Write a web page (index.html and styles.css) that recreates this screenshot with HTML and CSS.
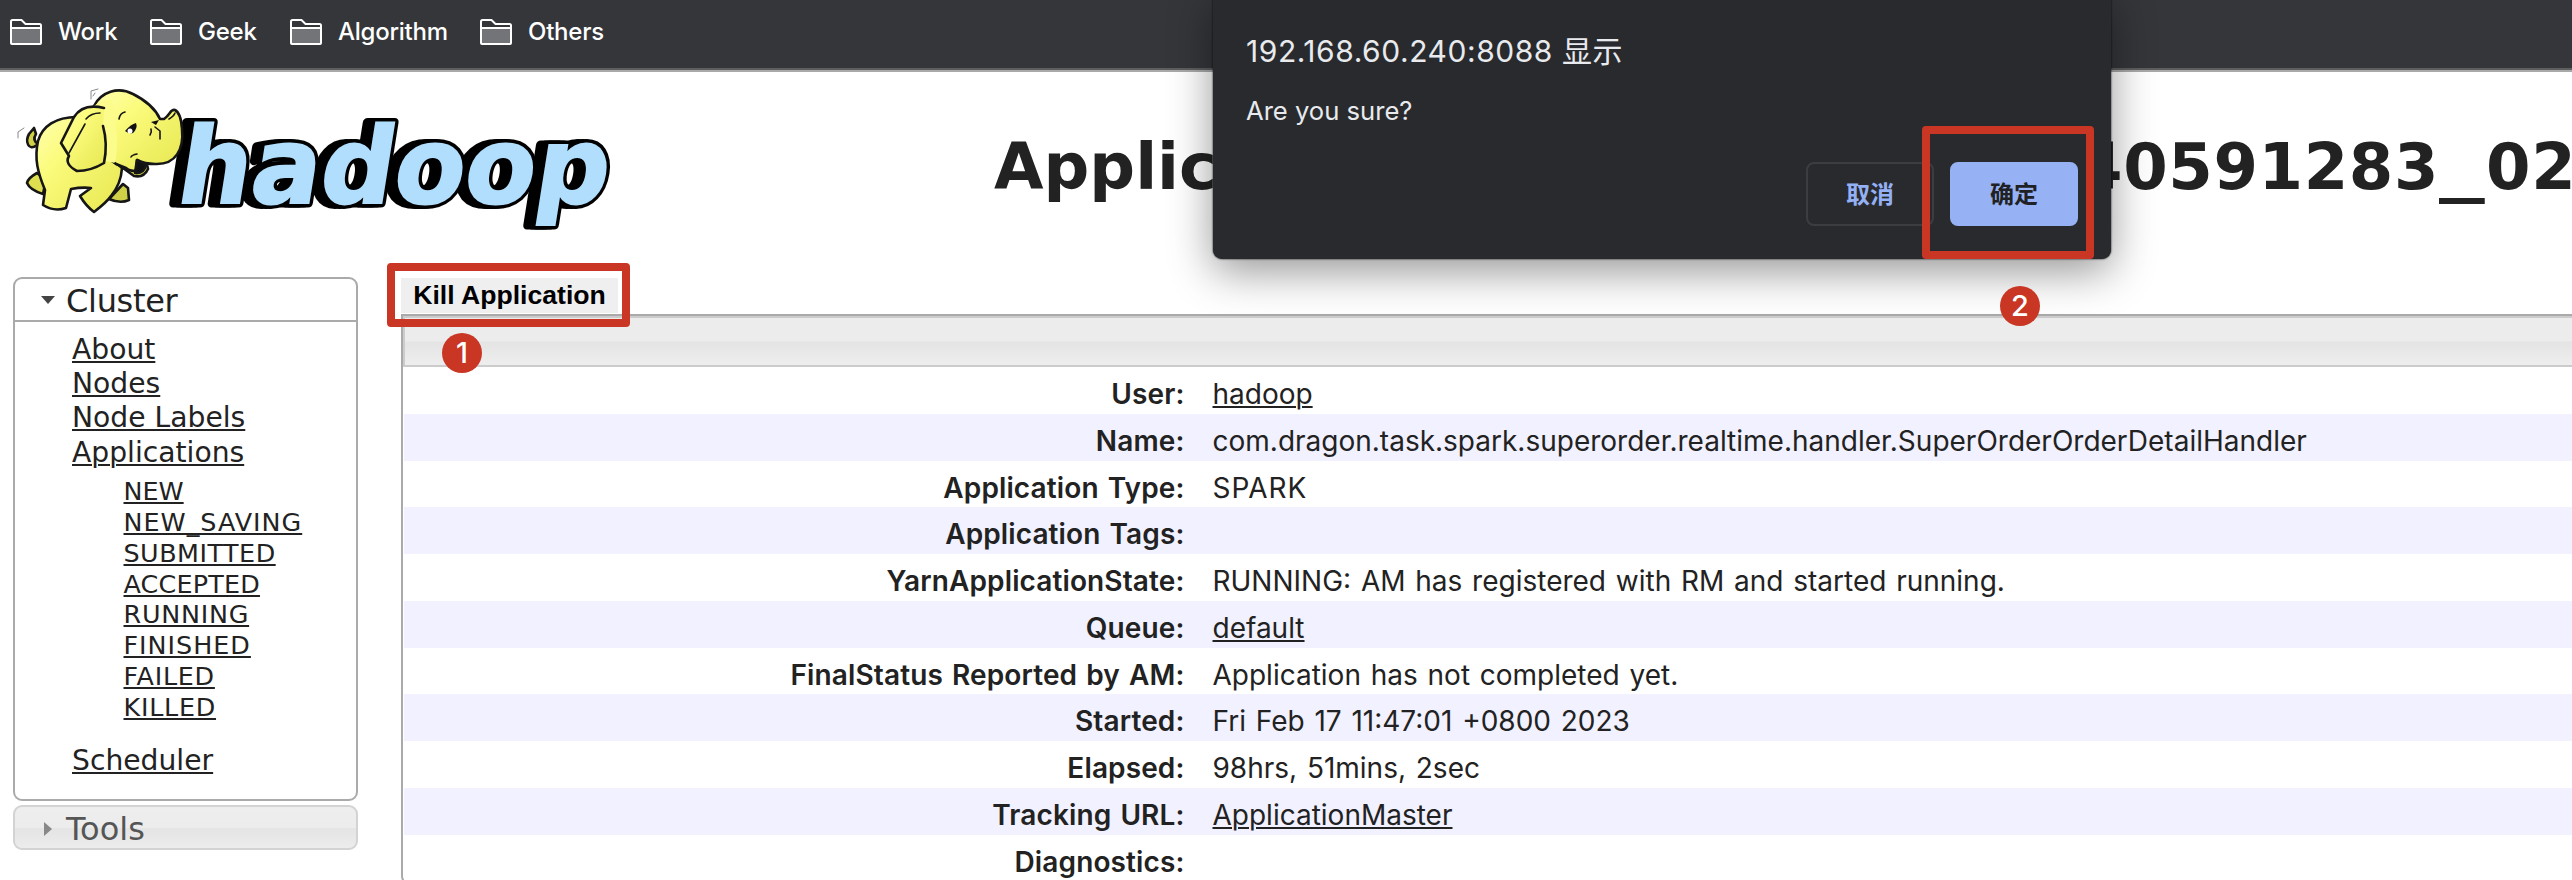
FILE: index.html
```
<!DOCTYPE html>
<html lang="zh-CN">
<head>
<meta charset="utf-8">
<title>Application</title>
<link rel="stylesheet" href="styles.css">
</head>
<body>
<svg class="defs" width="0" height="0" aria-hidden="true">
  <symbol id="folder" viewBox="0 0 32 26">
    <path d="M1 2.500q0-1.500 1.500-1.500h9l4 4h14q1.500 0 1.500 1.500V24q0 1-1 1H2q-1 0-1-1z" fill="#35363a" stroke="#fff" stroke-width="2"/>
    <path d="M2 10h28v14H2z" fill="#737477"/>
    <path d="M1 9h30" stroke="#fff" stroke-width="2"/>
  </symbol>
</svg>
<nav class="bookmarks">
  <a class="bookmark"><svg class="folder"><use href="#folder"/></svg><span class="w1">Work</span></a>
  <a class="bookmark"><svg class="folder"><use href="#folder"/></svg><span class="w2">Geek</span></a>
  <a class="bookmark"><svg class="folder"><use href="#folder"/></svg><span class="w3">Algorithm</span></a>
  <a class="bookmark"><svg class="folder"><use href="#folder"/></svg><span class="w4">Others</span></a>
</nav>
<header class="header">
  <svg class="logo" viewBox="0 80 640 150">
    <defs>
      <linearGradient id="skin" x1="0" y1="0" x2="1" y2="1">
        <stop offset="0" stop-color="#ffffb0"/><stop offset=".35" stop-color="#fbfb7c"/><stop offset="1" stop-color="#e6e650"/>
      </linearGradient>
    </defs>
    <g class="word" transform="translate(172 203) skewX(-9)">
      <text class="word-shadow" x="-7" y="0" textLength="431" lengthAdjust="spacingAndGlyphs">hadoop</text>
      <text class="word-shadow" x="-2" y="0" textLength="431" lengthAdjust="spacingAndGlyphs">hadoop</text>
      <text class="word-shadow" x="2" y="0" textLength="431" lengthAdjust="spacingAndGlyphs">hadoop</text>
      <text class="word-face" x="2" y="0" textLength="431" lengthAdjust="spacingAndGlyphs">hadoop</text>
    </g>
    <g stroke="#161616" stroke-width="2.600" stroke-linejoin="round" stroke-linecap="round" fill="url(#skin)">
      <path d="M37 145C28 152 25 141 29 134L34 128L36 134Q32 140 38 144z" fill="#cfcf48"/>
      <path d="M37 173Q28 178 27 183Q30 190 43 194L46 180z" fill="#dede50"/>
      <path d="M123 184L128 188L129 200Q120 204 109 199z" fill="#cfcf48"/>
      <path d="M80 117C55 116 42 127 38 141C34 159 38 173 45 190L43 205Q54 212 66 208L71 189Q82 187 91 188L80 196Q86 206 94 212Q107 202 111 196Q121 184 122 168z"/>
      <path d="M123 168L134 176Q144 178 148 169L146 160L132 158z" fill="#e8e858"/>
      <path d="M94 106C101 92 118 86 133 94C145 100 155 108 160 119L164 119C171 114 170 109 175 110Q181 113 182 129C184 149 176 165 155 164C146 164 141 162 137 160L136 171Q129 171 126 168L116 164C107 158 98 150 96 130z"/>
      <path d="M94 106Q80 120 84 140L100 160L115 163Q120 140 112 100Q104 98 94 106z" stroke="none" fill="#fcfc8c"/>
      <path d="M137 160L146 165Q144 174 135 173z" fill="#111"/>
      <path d="M104 108C88 104 79 109 74 117L61 143L69 156Q64 164 77 171Q91 171 104 163Q108 144 103 126"/>
      <path d="M69 153L85 124M86 119Q91 113 100 113M119 119Q120 113 125 112M131 157Q132 155 137 154M151 129Q152 132 150 135M155 127L160 131V139M169 119Q174 116 175 113M115 163L123 169" fill="none" stroke-width="1.600"/>
      <path d="M125 131Q131 124 136 123Q138 128 133 133Q129 134 125 131z" fill="#111" stroke="none"/><circle cx="130" cy="131" r="2.500" fill="#fff" stroke="none"/>
      <path d="M151 122l8-2-3 5z" fill="#111" stroke="none"/>
      <path d="M91 99V91L98 89M95 93L93 96M18 138V132L24 128" fill="none" stroke="#888" stroke-width="1"/>
    </g>
  </svg>
  <h1 class="title"><span class="title-start">Applic</span><span class="title-end">40591283<span class="under">_</span>02</span></h1>
</header>
<div class="layout">
  <aside class="sidebar">
    <section class="panel">
      <h3 class="panel-head"><svg class="tri" viewBox="0 0 16 16"><path d="M1 3h14l-7 8z" fill="#444"/></svg>Cluster</h3>
      <ul class="links">
        <li><a>About</a></li><li><a>Nodes</a></li><li><a>Node Labels</a></li><li><a>Applications</a></li>
      </ul>
      <ul class="states">
        <li><a>NEW</a></li><li class="ls-xl"><a>NEW_SAVING</a></li><li class="ls-s"><a>SUBMITTED</a></li><li class="ls-xs"><a>ACCEPTED</a></li>
        <li class="ls-m"><a>RUNNING</a></li><li class="ls-xl"><a>FINISHED</a></li><li class="ls-m"><a>FAILED</a></li><li class="ls-m"><a>KILLED</a></li>
      </ul>
      <ul class="links last"><li><a>Scheduler</a></li></ul>
    </section>
    <h3 class="tools"><svg class="tri" viewBox="0 0 16 16"><path d="M4 1v14l8-7z" fill="#888"/></svg>Tools</h3>
  </aside>
  <main class="content">
    <div class="actions"><button class="kill">Kill Application</button></div>
    <div class="info">
      <div class="info-head"></div>
      <dl class="rows">
        <div class="row"><dt>User:</dt><dd><a>hadoop</a></dd></div>
        <div class="row"><dt>Name:</dt><dd>com.dragon.task.spark.superorder.realtime.handler.SuperOrderOrderDetailHandler</dd></div>
        <div class="row"><dt>Application Type:</dt><dd class="ls-xl">SPARK</dd></div>
        <div class="row"><dt>Application Tags:</dt><dd></dd></div>
        <div class="row"><dt>YarnApplicationState:</dt><dd>RUNNING: AM has registered with RM and started running.</dd></div>
        <div class="row"><dt>Queue:</dt><dd><a>default</a></dd></div>
        <div class="row"><dt>FinalStatus Reported by AM:</dt><dd>Application has not completed yet.</dd></div>
        <div class="row"><dt>Started:</dt><dd>Fri Feb 17 11:47:01 +0800 2023</dd></div>
        <div class="row"><dt>Elapsed:</dt><dd>98hrs, 51mins, 2sec</dd></div>
        <div class="row"><dt>Tracking URL:</dt><dd><a>ApplicationMaster</a></dd></div>
        <div class="row"><dt>Diagnostics:</dt><dd></dd></div>
      </dl>
    </div>
  </main>
</div>
<div class="dialog" role="dialog">
  <div class="dialog-title">192.168.60.240:8088 显示</div>
  <div class="dialog-text">Are you sure?</div>
  <div class="dialog-buttons"><button class="btn cancel">取消</button><button class="btn ok">确定</button></div>
</div>
<div class="frame frame-kill"></div>
<div class="frame frame-ok"></div>
<div class="pin pin-1">1</div>
<div class="pin pin-2">2</div>
</body>
</html>
```
FILE: styles.css
```
* { box-sizing: border-box; }
html, body { margin: 0; height: 880px; overflow: hidden; }
body { width: 2572px; position: relative; background: #fff; color: #222; font-family: "DejaVu Sans", sans-serif; }
ul, dl, dd, h1, h3 { margin: 0; padding: 0; list-style: none; font-weight: normal; }
.defs { position: absolute; }

.bookmarks { height: 72px; padding: 0 0 6px 10px; display: flex; align-items: center; gap: 33px; background: #35363a; border-bottom: 2px solid #a9a9a9; box-shadow: inset 0 -2px #5d5e60; }
.bookmark { display: flex; align-items: center; gap: 16px; color: #fff; font: 500 24px/30px Inter, sans-serif; letter-spacing: -.250px; }
.bookmark span { white-space: nowrap; }
.folder { width: 32px; height: 26px; }
.w1 { width: 59px; }
.w2 { width: 59px; }
.w3 { width: 109px; }
.w4 { width: 78px; }

.header { height: 205px; display: flex; }
.logo { width: 640px; height: 150px; margin-top: 8px; flex: none; }
.word text { font-family: "DejaVu Sans", sans-serif; font-weight: bold; font-size: 106px; }
.word-shadow { fill: #000; stroke: #000; stroke-width: 9px; stroke-linejoin: round; }
.word-face { fill: #b0defc; stroke: #b0defc; stroke-width: 2px; }
.title { display: flex; margin: 55px 0 0 354px; width: 1578px; height: 80px; overflow: hidden; white-space: nowrap; font-size: 64px; line-height: 80px; font-weight: bold; }
.title-start { width: 1084px; flex: none; }
.title-end { letter-spacing: .600px; flex: none; }
.under { display: inline-block; width: 47px; transform: scaleX(1.430); transform-origin: left; }

.layout { display: flex; gap: 43px; padding-left: 13px; }
.sidebar { width: 345px; flex: none; }
.panel { height: 524px; border: 2px solid #aaa; border-radius: 9px; }
.panel-head { height: 43px; display: flex; align-items: center; padding: 2px 0 0 25px; border-bottom: 2px solid #aaa; font-size: 32px; letter-spacing: -.300px; }
.tri { width: 16px; height: 16px; margin-right: 10px; flex: none; }
.links { padding: 11px 0 0 57px; font-size: 28.200px; line-height: 34.200px; }
.states { padding: 6.500px 0 0 108.500px; font-size: 25.400px; line-height: 30.750px; }
.links.last { padding-top: 22px; }
.ls-xs { letter-spacing: .200px; }
.ls-s { letter-spacing: .500px; }
.ls-m { letter-spacing: .750px; }
.ls-xl { letter-spacing: 1px; }
a { text-decoration: underline; text-decoration-thickness: 2px; text-underline-offset: 2px; }
.bookmark { text-decoration: none; }
.tools { height: 45px; margin-top: 4px; display: flex; align-items: center; padding: 2px 0 0 25px; border: 2px solid #d3d3d3; border-radius: 9px; font-size: 32px; color: #555; background: linear-gradient(#eee, #ececec 50%, #e4e4e4 50%, #ececec); }

.content { width: 2200px; flex: none; }
.actions { height: 37px; padding-top: 1px; }
.kill { display: block; width: 217px; height: 35px; padding: 0; border: 0; background: #efefef; color: #000; font: bold 26.600px/35px "Liberation Sans", Arial, sans-serif; }
.info { height: 571px; border: 2px solid #aaa; border-radius: 0 0 0 9px; overflow: hidden; }
.info-head { height: 51px; border: 2px solid #ccc; background: linear-gradient(#ececec, #ececec 49%, #e4e4e4 51%, #eee); }
.rows { padding-left: 1px; font-family: Inter, sans-serif; font-size: 28px; word-spacing: 1.900px; }
.row { display: grid; grid-template-columns: 780.500px 1fr; column-gap: 28px; height: 46.750px; line-height: 54px; white-space: nowrap; }
.row:nth-child(even) { background: #f1f1ff; }
dt { text-align: right; font-weight: 600; letter-spacing: .120px; }

.dialog { position: absolute; left: 1213px; top: -10px; width: 898px; height: 269px; padding: 43px 33px 33px 33px; display: flex; flex-direction: column; background: #292a2d; border-radius: 9px; color: #e8eaed; font-family: Inter, "Noto Sans CJK SC", sans-serif; box-shadow: 0 0 2px #000, 0 12px 44px rgba(0,0,0,.42); }
.dialog-title { font-size: 30px; line-height: 36px; letter-spacing: .550px; }
.dialog-text { margin-top: 25px; font-size: 25.600px; line-height: 34px; }
.dialog-buttons { margin-top: auto; display: flex; justify-content: flex-end; gap: 16px; }
.btn { width: 128px; height: 64px; padding: 0 0 2px; border: 2px solid #3c3d41; border-radius: 8px; background: none; color: #94b1f5; font: bold 24px/58px "Noto Sans CJK SC", sans-serif; }
.btn.ok { border-color: #96b2f4; background: #96b2f4; color: #202124; }

.frame { position: absolute; border: 8px solid #c93624; border-radius: 4px; }
.frame-kill { left: 387px; top: 263px; width: 243px; height: 64px; }
.frame-ok { left: 1922px; top: 126px; width: 172px; height: 133px; }
.pin { position: absolute; width: 40px; height: 40px; border-radius: 50%; background: #c93624; color: #fff; text-align: center; font: 500 29px/40px Inter, sans-serif; }
.pin-1 { left: 442px; top: 333px; }
.pin-2 { left: 2000px; top: 286px; }
```
